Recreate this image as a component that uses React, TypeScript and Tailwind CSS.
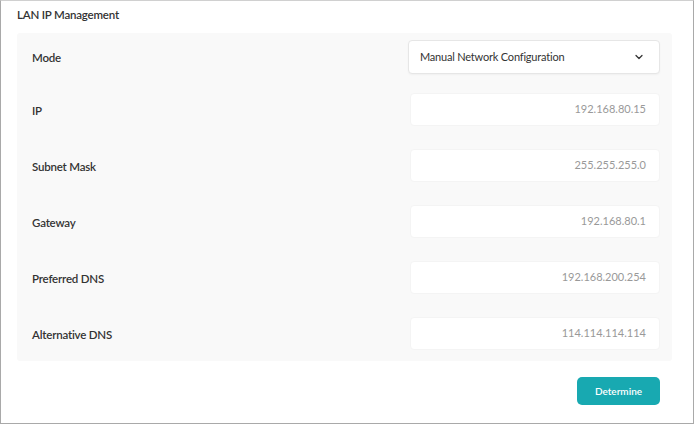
import { ChevronDown } from "lucide-react";

const fields = [
  { label: "IP", value: "192.168.80.15" },
  { label: "Subnet Mask", value: "255.255.255.0" },
  { label: "Gateway", value: "192.168.80.1" },
  { label: "Preferred DNS", value: "192.168.200.254" },
  { label: "Alternative DNS", value: "114.114.114.114" },
];

export default function App() {
  return (
    <div className="w-[694px] h-[424px] border border-[#a9a9a9] border-t-[#d0d0d0] bg-white font-['Lato',sans-serif] flex flex-col">
      <h1 className="pl-[16px] pt-[5px] h-[32px] text-[11.5px] tracking-[-0.2px] font-semibold leading-[18px] text-[#333]">
        LAN IP Management
      </h1>

      <div className="ml-[16px] w-[655px] bg-[#f9f9f9] rounded-[3px] pt-[7px] pb-[11px] pl-[15px] pr-[12px] flex flex-col">
        <div className="flex items-center justify-between h-[34px]">
          <span className="text-[11.5px] tracking-[-0.2px] font-semibold text-[#333] translate-y-[1px]">Mode</span>
          <div className="w-[252px] h-[34px] bg-white border border-[#e6e6e6] rounded-[4px] shadow-[0_1px_2px_rgba(0,0,0,0.04)] flex items-center justify-between pl-[11px] pr-[14px]">
            <span className="text-[11px] tracking-[-0.2px] text-[#333]">Manual Network Configuration</span>
            <ChevronDown className="w-[12px] h-[12px] text-[#333]" strokeWidth={2.5} />
          </div>
        </div>

        {fields.map((f, i) => (
          <div
            key={f.label}
            className={`flex items-center justify-between h-[33px] ${i === 0 ? "mt-[19px]" : "mt-[23px]"}`}
          >
            <span className="text-[11.5px] tracking-[-0.2px] font-semibold text-[#333] translate-y-[1px]">{f.label}</span>
            <div className="w-[250px] h-[33px] bg-white rounded-[4px] border border-[#f4f4f4] flex items-center justify-end pr-[13px]">
              <span className="text-[11px] text-[#999]">{f.value}</span>
            </div>
          </div>
        ))}
      </div>

      <div className="flex justify-end pr-[33px] pt-[16px]">
        <button className="w-[83px] h-[28px] rounded-[5px] bg-[#18a9b1] text-white text-[10px] font-semibold">
          Determine
        </button>
      </div>
    </div>
  );
}
